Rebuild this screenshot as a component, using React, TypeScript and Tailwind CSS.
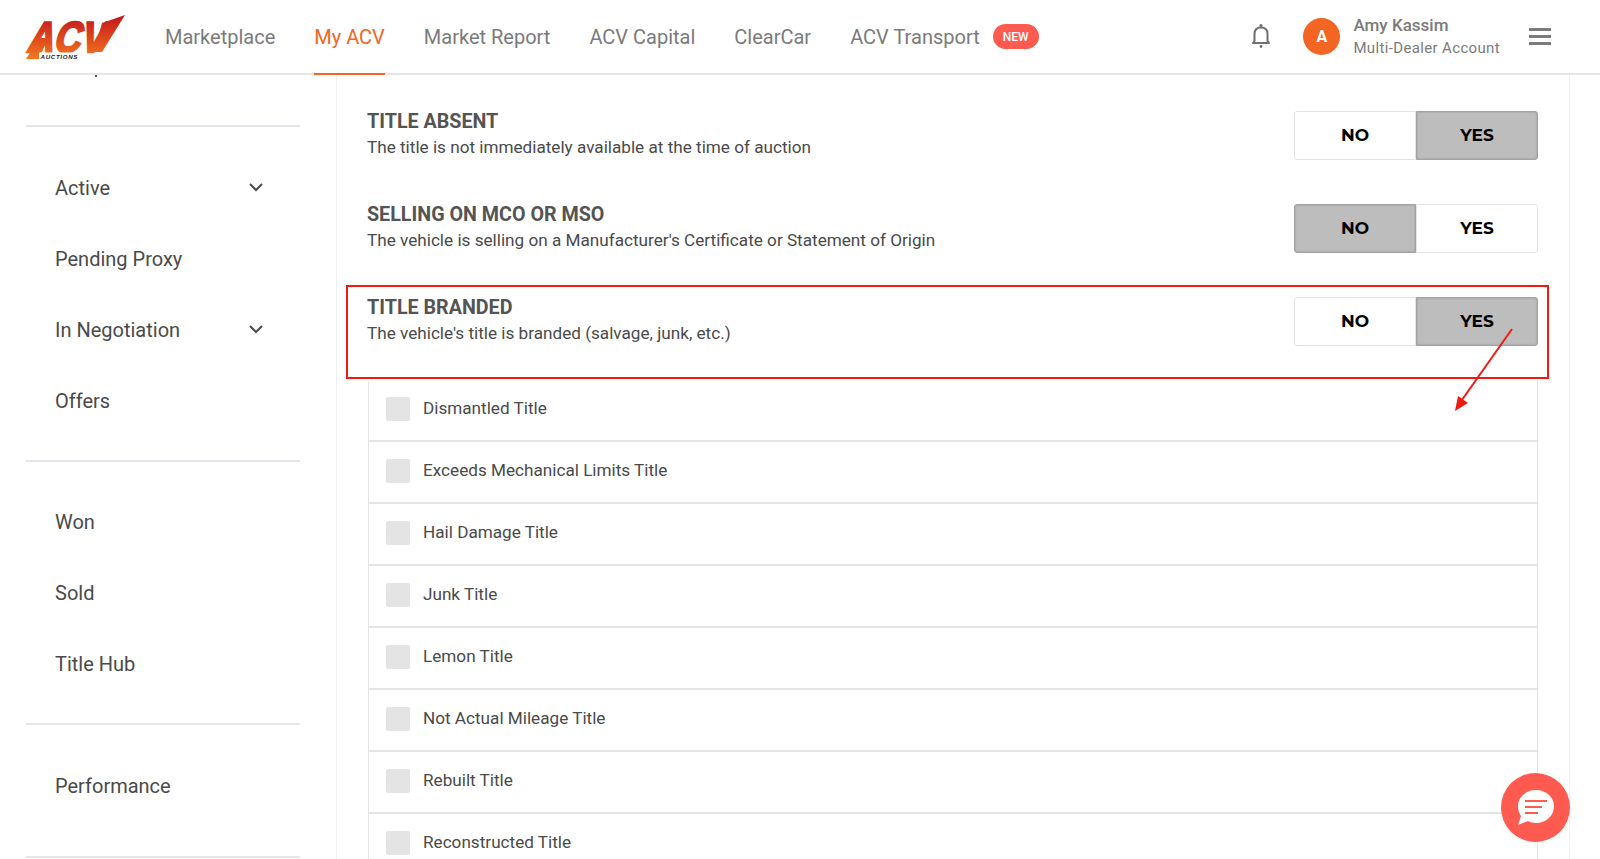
import React from 'react';

const navItems = ['Marketplace', 'My ACV', 'Market Report', 'ACV Capital', 'ClearCar', 'ACV Transport'];

const sideGroups = [
  [
    { label: 'Active', chevron: true },
    { label: 'Pending Proxy' },
    { label: 'In Negotiation', chevron: true },
    { label: 'Offers' },
  ],
  [{ label: 'Won' }, { label: 'Sold' }, { label: 'Title Hub' }],
  [{ label: 'Performance' }],
];

const brandTypes = [
  'Dismantled Title',
  'Exceeds Mechanical Limits Title',
  'Hail Damage Title',
  'Junk Title',
  'Lemon Title',
  'Not Actual Mileage Title',
  'Rebuilt Title',
  'Reconstructed Title',
];

const Logo: React.FC = () => (
  <svg width="100" height="46" viewBox="0 0 100 46" className="shrink-0 overflow-visible">
    <defs>
      <linearGradient id="acv" gradientUnits="userSpaceOnUse" x1="0" y1="2" x2="0" y2="46">
        <stop offset="0" stopColor="#c4161c" />
        <stop offset="1" stopColor="#f57a20" />
      </linearGradient>
    </defs>
    {/* slanted bar that runs out of the V, and the foot of the A */}
    <polygon points="76,9 99,1 76,38 68,38" fill="url(#acv)" />
    <polygon points="0,45 14,24 22,24 13,45" fill="url(#acv)" />
    <text
      x="11"
      y="38"
      transform="skewX(-16)"
      fontFamily="Liberation Sans, sans-serif"
      fontSize="43"
      fontWeight="700"
      textLength="77"
      lengthAdjust="spacingAndGlyphs"
      fill="url(#acv)"
      stroke="url(#acv)"
      strokeWidth="2.4"
    >
      ACV
    </text>
    <rect x="13" y="38.5" width="40" height="7.5" fill="#fff" />
    <text
      x="14.5"
      y="44.5"
      fontFamily="Liberation Sans, sans-serif"
      fontSize="6.2"
      fontWeight="700"
      fontStyle="italic"
      textLength="37"
      fill="#222"
    >
      AUCTIONS
    </text>
  </svg>
);

const Toggle: React.FC<{ value: 'NO' | 'YES' }> = ({ value }) => (
  <div className="flex h-[49px] w-[244px] shrink-0 rounded-[3px] font-['Montserrat','Open_Sans',sans-serif] text-[17px] font-bold text-black">
    {(['NO', 'YES'] as const).map((opt) => (
      <div
        key={opt}
        className={
          value === opt
            ? 'flex flex-1 items-center justify-center border border-[#a3a3a3] bg-[#bdbdbd] shadow-[inset_0_0_2px_#8f8f8f] first:rounded-l-[3px] last:rounded-r-[3px]'
            : 'flex flex-1 items-center justify-center border border-[#e4e4e4] bg-white first:rounded-l-[3px] last:rounded-r-[3px]'
        }
      >
        {opt}
      </div>
    ))}
  </div>
);

const TitleRow: React.FC<{ title: string; desc: string; value: 'NO' | 'YES' }> = ({ title, desc, value }) => (
  <div className="flex h-[49px] items-start justify-between">
    <div className="-mt-[1px]">
      <div className="text-[19.7px] leading-[24px] font-bold text-[#545454]">{title}</div>
      <div className="mt-[1px] text-[17.15px] leading-[24px] text-[#4a4a4a]">{desc}</div>
    </div>
    <Toggle value={value} />
  </div>
);

export default function App() {
  return (
    <div className="relative flex h-[859px] w-[1600px] flex-col overflow-hidden bg-white font-['Roboto',sans-serif]">
      <header className="flex h-[75px] shrink-0 items-stretch border-b-2 border-[#e6e6e6] pl-[26px] pr-[49px]">
        <div className="flex items-center">
          <Logo />
        </div>
        <nav className="ml-[39px] flex gap-[39px]">
          {navItems.map((item) => (
            <div
              key={item}
              className={
                item === 'My ACV'
                  ? 'relative flex items-center text-[20px] text-[#f26522]'
                  : 'relative flex items-center text-[20px] text-[#7b7b7b]'
              }
            >
              {item}
              {item === 'My ACV' && <span className="absolute inset-x-0 -bottom-[2px] h-[2px] bg-[#f26522]" />}
            </div>
          ))}
          <div className="-ml-[26px] flex items-center">
            <span className="flex h-[25px] w-[46px] items-center justify-center rounded-full bg-[#ff5a50] text-[12px] font-medium text-white">
              NEW
            </span>
          </div>
        </nav>
        <div className="ml-auto flex items-center">
          <svg width="20" height="26" viewBox="0 0 20 26" fill="none" stroke="#6f6f6f" strokeWidth="2" className="mr-[32px] -mt-[2px]">
            <path d="M2 20 L3.5 18 V11 C3.5 7 6 4.5 10 4.5 C14 4.5 16.5 7 16.5 11 V18 L18 20 Z" strokeLinejoin="round" />
            <circle cx="10" cy="2.5" r="1.6" fill="#6f6f6f" stroke="none" />
            <circle cx="10" cy="23.5" r="1.4" fill="#6f6f6f" stroke="none" />
          </svg>
          <div className="flex h-[37px] w-[37px] items-center justify-center rounded-full bg-[#f26522] text-[16px] font-bold text-white">
            A
          </div>
          <div className="ml-[13px]">
            <div className="text-[17px] leading-[22px] font-medium text-[#7b7b7b]">Amy Kassim</div>
            <div className="mt-[1px] text-[15px] leading-[22px] tracking-[0.35px] text-[#7b7b7b]">Multi-Dealer Account</div>
          </div>
          <div className="ml-[29px] flex w-[22px] flex-col gap-[4px]">
            <span className="h-[3px] bg-[#7b7b7b]" />
            <span className="h-[3px] bg-[#7b7b7b]" />
            <span className="h-[3px] bg-[#7b7b7b]" />
          </div>
        </div>
      </header>

      <div className="flex min-h-0 flex-1">
        <aside className="w-[337px] shrink-0 border-r border-[#f0f0f0] pl-[26px] pr-[36px] pt-[50px]">
          {sideGroups.map((group, i) => (
            <div key={i} className="border-t-2 border-[#e4e4ea] pt-[25px] pb-[23.5px] last:border-b-2 last:pb-[35px]">
              {group.map((item) => (
                <div key={item.label} className="flex h-[71px] items-center justify-between pl-[29px] pr-[37px] text-[20px] text-[#4a4a4a]">
                  {item.label}
                  {item.chevron && (
                    <svg width="14" height="9" viewBox="0 0 14 9" fill="none" stroke="#4a4a4a" strokeWidth="2">
                      <path d="M1 1 L7 7 L13 1" />
                    </svg>
                  )}
                </div>
              ))}
            </div>
          ))}
        </aside>

        <main className="w-[1233px] shrink-0 border-r border-[#f0f0f0] pt-[36px] pl-[30px] pr-[31px]">
          <TitleRow title="TITLE ABSENT" desc="The title is not immediately available at the time of auction" value="YES" />
          <div className="mt-[44px]">
            <TitleRow title="SELLING ON MCO OR MSO" desc="The vehicle is selling on a Manufacturer's Certificate or Statement of Origin" value="NO" />
          </div>
          <div className="-ml-[21px] -mr-[11px] mt-[32px] h-[94px] border-2 border-[#f01a12] pl-[19px] pr-[9px] pt-[10px]">
            <TitleRow title="TITLE BRANDED" desc="The vehicle's title is branded (salvage, junk, etc.)" value="YES" />
          </div>
          <div className="ml-[1px] mt-[1px] rounded-t-[3px] border-x border-[#e4e4e4]">
            {brandTypes.map((label) => (
              <div key={label} className="flex h-[62px] items-center border-b-2 border-[#e4e4e4] pb-[2px] pl-[17px] text-[17.15px] text-[#4a4a4a]">
                <span className="mr-[13px] h-[24px] w-[24px] rounded-[2px] bg-[#e4e4e4]" />
                {label}
              </div>
            ))}
          </div>
        </main>
      </div>

      {/* descender of a sidebar label scrolled under the header */}
      <span className="absolute left-[95px] top-[75px] h-[2px] w-[2px] bg-[#5a5a5a]" />

      <svg width="80" height="100" viewBox="0 0 80 100" className="pointer-events-none absolute left-[1450px] top-[325px]">
        <path d="M62 4 L7 82" stroke="#f01a12" strokeWidth="2" />
        <path d="M5 86 L8 71 L18 78 Z" fill="#f01a12" />
      </svg>

      <button className="absolute left-[1501px] top-[773px] flex h-[69px] w-[69px] items-center justify-center rounded-full bg-[#ff5a50]">
        <svg width="38" height="35" viewBox="0 0 38 35">
          <path d="M19 0 C29 0 37 7 37 16 C37 26 29 33 19 33 C15 33 13 32 11 31 L1 35 L4 26 C2 23 1 20 1 16 C1 7 9 0 19 0 Z" fill="#fff" />
          <path d="M8 11 H30 M8 17 H25 M8 23 H21" stroke="#ff5a50" strokeWidth="1.8" />
        </svg>
      </button>
    </div>
  );
}
